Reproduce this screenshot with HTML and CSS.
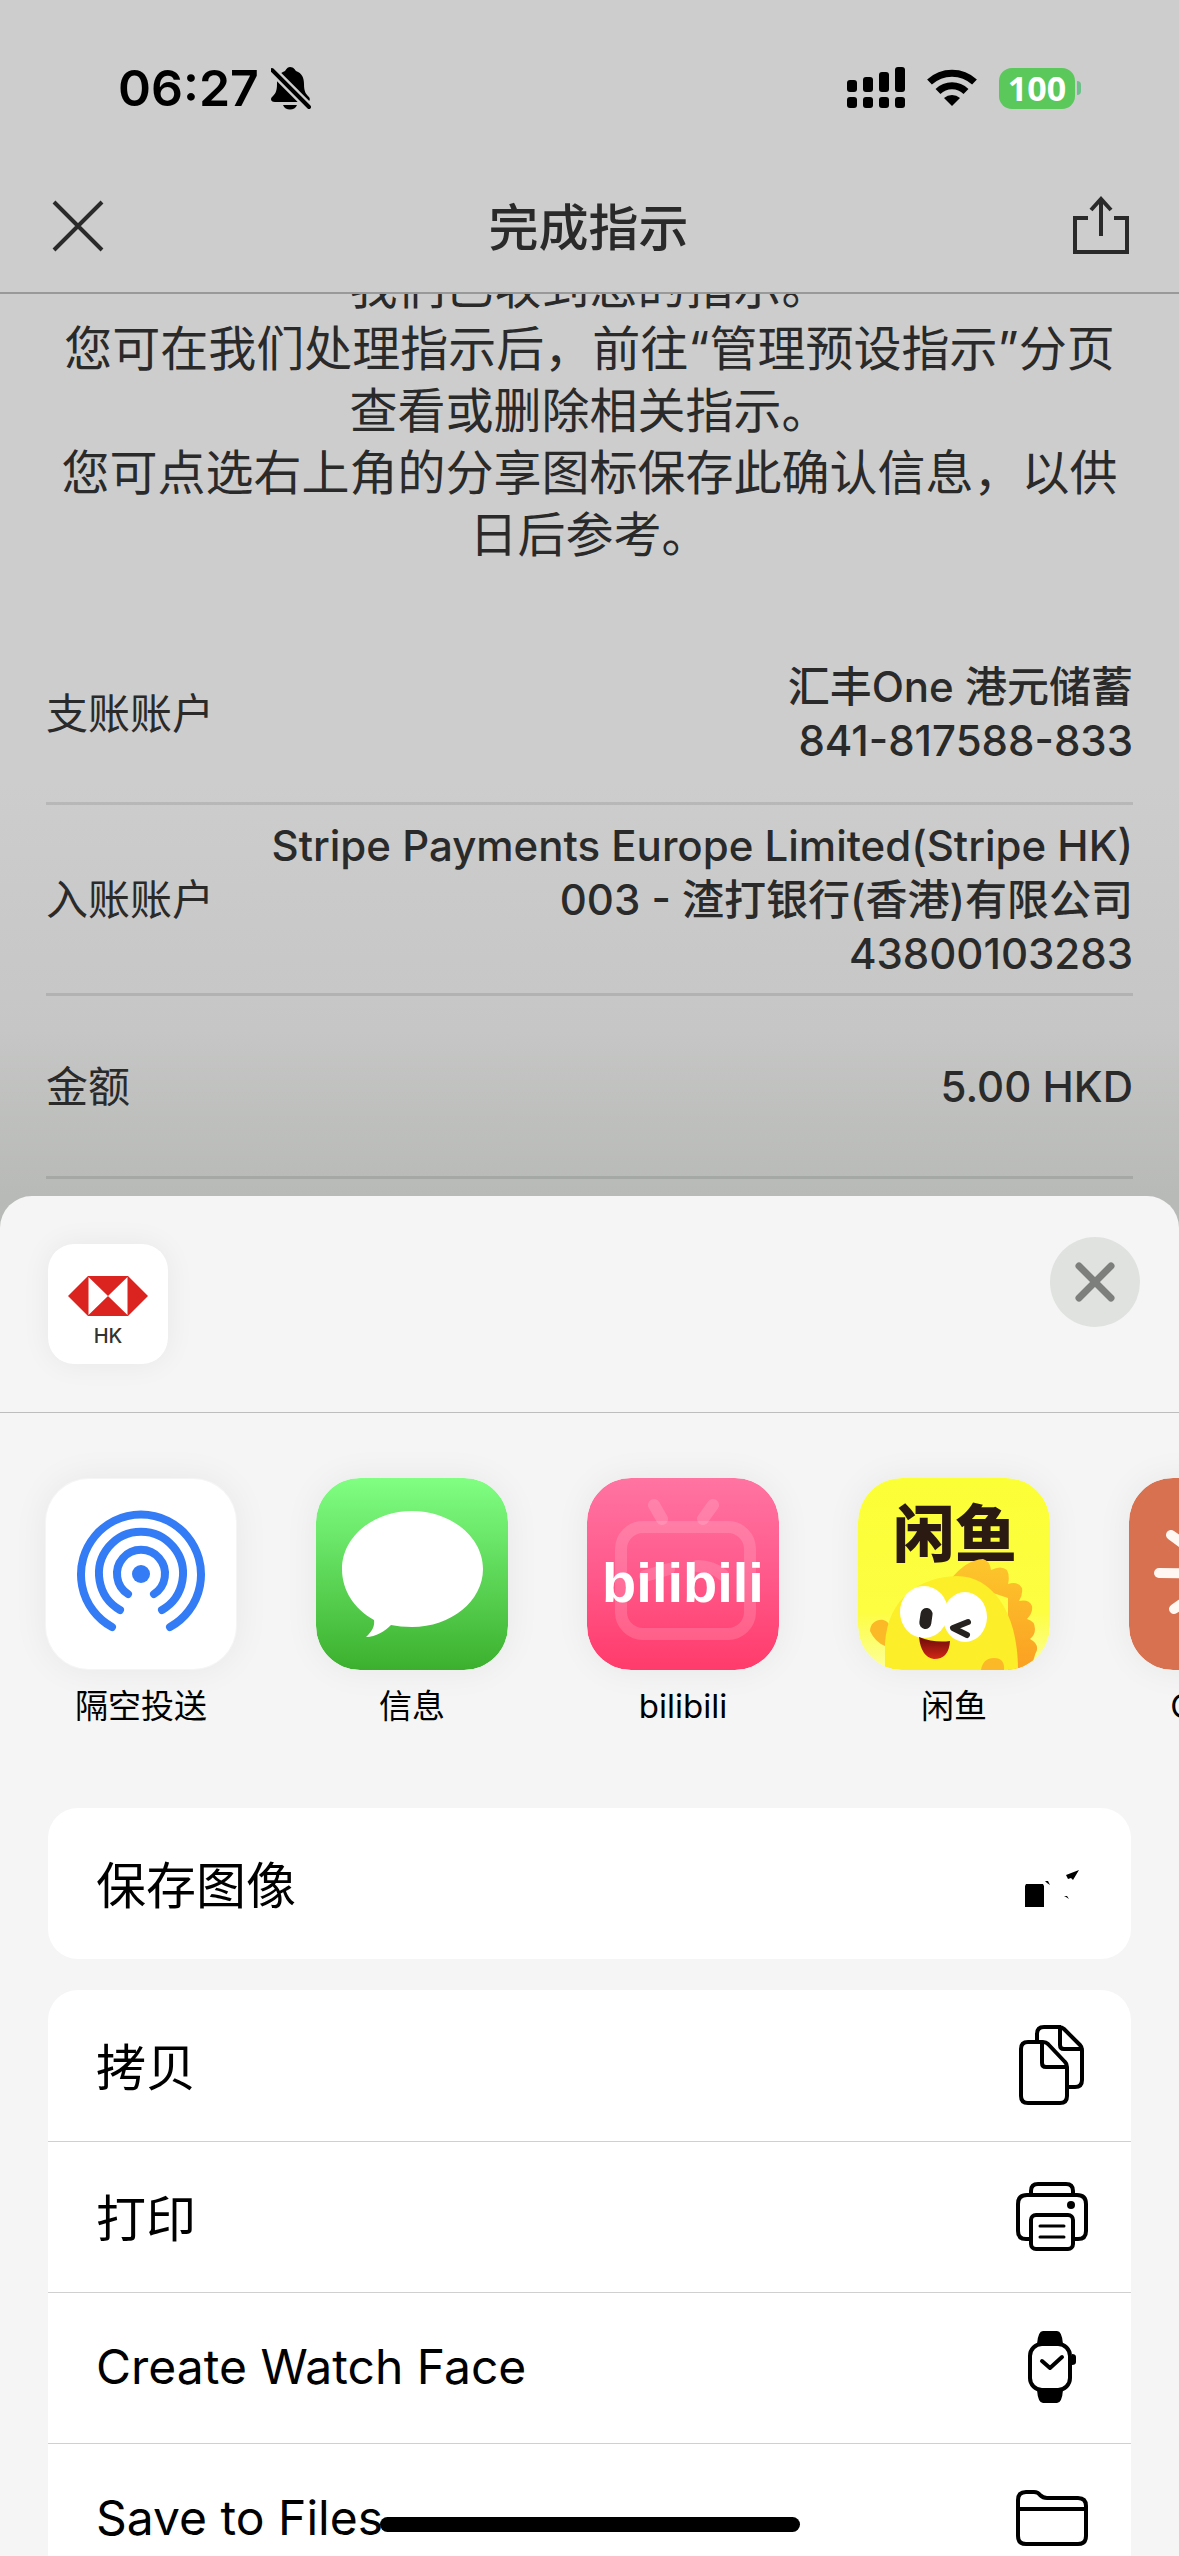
FILE: index.html
```html
<!DOCTYPE html>
<html lang="zh-CN">
<head>
<meta charset="utf-8">
<meta name="viewport" content="width=device-width, initial-scale=1">
<title>完成指示</title>
<link rel="stylesheet" href="styles.css">
</head>
<body>
<div class="screen">
  <header class="status">
    <div class="status-left">
      <span class="time">06:27</span>
      <svg class="bell" viewBox="0 0 40 43" aria-hidden="true">
        <path d="M19 0C23 0 24 3 25 4C31 6 33 11 33 17C33 25 35 27 38 30C40 33 38 35 35 35H4C0 35 -1 32 1 30C4 27 6 25 6 17C6 11 8 6 14 4C15 3 16 0 19 0ZM12 38H26C25 41 22 42.500 19 42.500S13 41 12 38Z"/>
        <path class="bell-gap" d="M1 3L38 40"/>
        <path class="bell-slash" d="M1 3L38 40"/>
      </svg>
    </div>
    <div class="status-right">
      <svg class="signal" viewBox="0 0 58 42" aria-hidden="true">
        <rect x="0" y="13" width="10" height="12" rx="3"/><rect x="16" y="10" width="10" height="15" rx="3"/><rect x="32" y="5" width="10" height="20" rx="3"/><rect x="48" y="0" width="10" height="25" rx="3"/>
        <rect x="0" y="30" width="10" height="11" rx="3"/><rect x="16" y="30" width="10" height="11" rx="3"/><rect x="32" y="30" width="10" height="11" rx="3"/><rect x="48" y="30" width="10" height="11" rx="3"/>
      </svg>
      <svg class="wifi" viewBox="0 0 50 38" aria-hidden="true">
        <path class="wifi-arc" d="M2.500 13A33 33 0 0 1 47.500 13M11 22.500A20 20 0 0 1 39 22.500"/>
        <path d="M25 37L17 29A12 12 0 0 1 33 29Z"/>
      </svg>
      <div class="battery"><span class="battery-level">100</span><span class="battery-nub"></span></div>
    </div>
  </header>

  <nav class="navbar">
    <button class="icon-button" aria-label="关闭">
      <svg class="nav-close" viewBox="0 0 52 52" aria-hidden="true"><path d="M2 2L50 50M50 2L2 50"/></svg>
    </button>
    <h1 class="title">完成指示</h1>
    <button class="icon-button" aria-label="分享">
      <svg class="nav-share" viewBox="0 0 56 60" aria-hidden="true"><path d="M15 22H2V56H54V22H41M28 40V3M18 14L28 3L38 14"/></svg>
    </button>
  </nav>

  <main class="content">
    <p class="message">我们已收到您的指示。<br>您可在我们处理指示后，前往“管理预设指示”分页查看或删除相关指示。<br>您可点选右上角的分享图标保存此确认信息，以供日后参考。</p>
    <dl class="details">
      <div class="detail"><dt>支账账户</dt><dd>汇丰One 港元储蓄<br>841-817588-833</dd></div>
      <div class="detail"><dt>入账账户</dt><dd>Stripe Payments Europe Limited(Stripe HK)<br>003 - 渣打银行(香港)有限公司<br>43800103283</dd></div>
      <div class="detail"><dt>金额</dt><dd>5.00 HKD</dd></div>
    </dl>
  </main>

  <section class="sheet" aria-label="共享">
    <div class="sheet-header">
      <svg class="source-icon" viewBox="0 0 120 120" role="img" aria-label="HSBC HK">
        <rect width="120" height="120" rx="26" fill="#fff"/>
        <path fill="#db2420" d="M20 52L40 32H80L100 52L80 72H40Z"/>
        <path fill="#fff" d="M40.500 33L60 52L40.500 71ZM79.500 33L60 52L79.500 71Z"/>
        <text class="source-text" x="60" y="99" text-anchor="middle">HK</text>
      </svg>
      <button class="sheet-close" aria-label="关闭共享">
        <svg viewBox="0 0 90 90" aria-hidden="true"><path d="M29 29L61 61M61 29L29 61"/></svg>
      </button>
    </div>

    <div class="apps">
      <button class="app">
        <svg class="app-icon" viewBox="0 0 192 192" aria-hidden="true">
          <rect x="1" y="1" width="190" height="190" rx="43" fill="#fff"/>
          <g fill="none" stroke="#347cf6" stroke-width="8" stroke-linecap="round">
            <path d="M67 149A60 60 0 1 1 125 149"/>
            <path d="M75 132A42 42 0 1 1 117 132"/>
            <path d="M83 116A24 24 0 1 1 109 116"/>
          </g>
          <circle cx="96" cy="96" r="9" fill="#347cf6"/>
        </svg>
        <span>隔空投送</span>
      </button>
      <button class="app">
        <svg class="app-icon" viewBox="0 0 192 192" aria-hidden="true">
          <defs><linearGradient id="green" x2="0" y2="1"><stop stop-color="#80ff83"/><stop offset="1" stop-color="#3cb02e"/></linearGradient></defs>
          <rect width="192" height="192" rx="44" fill="url(#green)"/>
          <path fill="#fff" d="M96 33C135 33 167 59 167 91S135 149 96 149C88 149 81 148 75 147C69 153 60 159 50 159C55 154 59 149 58 142C38 131 26 112 26 91C26 59 57 33 96 33Z"/>
        </svg>
        <span>信息</span>
      </button>
      <button class="app">
        <svg class="app-icon" viewBox="0 0 192 192" aria-hidden="true">
          <defs><linearGradient id="pink" x2="0" y2="1"><stop stop-color="#ff74a2"/><stop offset=".45" stop-color="#ff5c8e"/><stop offset="1" stop-color="#ff3b6b"/></linearGradient></defs>
          <rect width="192" height="192" rx="44" fill="url(#pink)"/>
          <g fill="none" stroke="#fff" stroke-opacity=".15" stroke-width="12" stroke-linecap="round">
            <rect x="34" y="49" width="129" height="107" rx="22"/>
            <path d="M67 27L75 41M126 27L116 41M58 98L82 91M110 88Q126 88 136 97"/>
          </g>
          <text class="bili-mark" x="96" y="124" text-anchor="middle">bilibili</text>
        </svg>
        <span>bilibili</span>
      </button>
      <button class="app">
        <svg class="app-icon" viewBox="0 0 192 192" aria-hidden="true">
          <defs>
            <clipPath id="tile"><rect width="192" height="192" rx="44"/></clipPath>
            <linearGradient id="yellow" x2="0" y2="1"><stop stop-color="#fbff35"/><stop offset=".7" stop-color="#fdfd42"/><stop offset="1" stop-color="#fcff9b"/></linearGradient>
            <linearGradient id="orange" x2="0" y2="1"><stop stop-color="#fdc72c"/><stop offset="1" stop-color="#fb9f22"/></linearGradient>
            <linearGradient id="mouth" x2="0" y2="1"><stop stop-color="#6b0b08"/><stop offset="1" stop-color="#d32717"/></linearGradient>
          </defs>
          <g clip-path="url(#tile)">
            <rect width="192" height="192" fill="url(#yellow)"/>
            <text class="fish-mark" x="97" y="79" text-anchor="middle">闲鱼</text>
            <path fill="url(#orange)" d="M93 101Q108 82 125 81Q132 83 133 92Q143 87 149 92Q152 98 150 106Q160 103 164 110Q165 117 161 123Q171 121 174 128Q175 135 169 141Q177 143 177 151Q177 157 172 161Q180 165 179 172Q175 180 174 192H150V120Z"/>
            <path fill="#fbb928" d="M12 153C12 141 29 137 32 149L27 168Q17 164 12 153Z"/>
            <path fill="#fcee28" d="M27 192V165C30 119 63 99 99 98C132 98 160 131 160 192Z"/>
            <ellipse cx="66" cy="134" rx="24" ry="26" fill="#fff"/>
            <ellipse cx="107" cy="139" rx="22" ry="25" fill="#fff"/>
            <rect x="62" y="130" width="12" height="21" rx="6" fill="#25221f" transform="rotate(8 68 140)"/>
            <path d="M110 144L95 150L109 157" fill="none" stroke="#25221f" stroke-width="6" stroke-linecap="round" stroke-linejoin="round"/>
            <path fill="url(#mouth)" d="M61 159Q76 165 92 163Q91 181 76 181Q63 179 61 159Z"/>
            <path fill="#fbb928" d="M123 192Q125 180 136 180T146 192Z"/>
          </g>
        </svg>
        <span>闲鱼</span>
      </button>
      <button class="app">
        <svg class="app-icon" viewBox="0 0 192 192" aria-hidden="true">
          <rect width="192" height="192" rx="44" fill="#d77150"/>
          <path d="M96 96L30 95M96 96L42 57M96 96L45 131M96 96L70 35M96 96L98 28M96 96L138 40M96 96L162 78M96 96L162 108M96 96L142 142M96 96L104 164M96 96L66 154" stroke="#fff7f2" stroke-width="10" stroke-linecap="round"/>
        </svg>
        <span>Claude</span>
      </button>
    </div>

    <div class="actions">
      <button class="action">
        <span>保存图像</span>
        <svg class="action-icon" viewBox="0 0 72 84" aria-hidden="true">
          <path class="solid" d="M10 44H27L28 46V67H9V46ZM50 35L63 30L57 40L55 38L52 39ZM29 41L32 41L34 45L31 43ZM48 56L51 56L53 59L50 57Z"/>
        </svg>
      </button>
    </div>

    <div class="actions">
      <button class="action">
        <span>拷贝</span>
        <svg class="action-icon" viewBox="0 0 72 84" aria-hidden="true">
          <path d="M12 20H27Q30 20 32 22L49 40Q51 42 51 45V74Q51 81 44 81H12Q5 81 5 74V27Q5 20 12 20ZM26 20V41Q26 45 30 45H51M21 20V12Q21 5 28 5H43Q46 5 48 7L64 23Q66 25 66 28V58Q66 65 59 65H51M44 5V23Q44 27 48 27H66"/>
        </svg>
      </button>
      <button class="action">
        <span>打印</span>
        <svg class="action-icon" viewBox="0 0 72 84" aria-hidden="true">
          <path d="M15 66H10Q2 66 2 58V31Q2 22 11 22H61Q70 22 70 31V58Q70 66 62 66H57M15 22V18Q15 11 22 11H50Q57 11 57 18V22"/>
          <rect x="15" y="42" width="42" height="34" rx="5"/>
          <path class="thin" d="M24 53H48M24 64H48"/>
          <circle class="solid" cx="55" cy="32" r="4"/>
        </svg>
      </button>
      <button class="action">
        <span lang="en">Create Watch Face</span>
        <svg class="action-icon" viewBox="0 0 72 84" aria-hidden="true">
          <path class="solid" d="M21 20Q22 7 27 7H41Q46 7 47 20ZM21 66Q22 79 27 79H41Q46 79 47 66ZM56 30Q60 30 60 33V38Q60 41 56 41Z"/>
          <rect class="face" x="14" y="20" width="40" height="46" rx="12"/>
          <path d="M26 37L34 44L46 33"/>
        </svg>
      </button>
      <button class="action">
        <span lang="en">Save to Files</span>
        <svg class="action-icon" viewBox="0 0 72 84" aria-hidden="true">
          <path d="M2 25Q2 17 10 17H18Q22 17 24 20Q27 23 31 23H62Q70 23 70 31V61Q70 69 62 69H10Q2 69 2 61ZM2 34H70"/>
        </svg>
      </button>
    </div>
  </section>
  <div class="home-bar"></div>
</div>
</body>
</html>
```
FILE: styles.css
```css
* { box-sizing: border-box; }

body {
  margin: 0;
  font-family: Inter, "Noto Sans CJK SC", sans-serif;
  color: #000;
}

button {
  margin: 0;
  padding: 0;
  border: 0;
  background: none;
  color: inherit;
  font: inherit;
}

svg { display: block; }

.screen {
  position: relative;
  display: flex;
  flex-direction: column;
  height: 100vh;
  overflow: hidden;
  background: linear-gradient(#cdcdcd 0, #cdcdcd 780px, #c5c6c5 1030px, #b8bab7 1196px, #b8bab7);
}

.status {
  flex: none;
  display: flex;
  align-items: center;
  justify-content: space-between;
  height: 160px;
  padding: 16px 98px 0 118px;
}

.status-left, .status-right { display: flex; align-items: center; }
.status-left { gap: 12px; }
.status-right { gap: 22px; }
.time { font-size: 50px; font-weight: 600; line-height: 60px; }
.bell { width: 40px; height: 43px; }
.bell-gap { stroke: #cdcdcd; stroke-width: 9px; }
.bell-slash { stroke: #000; stroke-width: 4px; stroke-linecap: round; }
.signal { width: 58px; height: 42px; }
.wifi { width: 50px; height: 38px; }
.wifi-arc { fill: none; stroke: #000; stroke-width: 7px; }

.battery { display: flex; align-items: center; gap: 2px; }
.battery-level {
  width: 76px;
  border-radius: 13px;
  background: #5ac85a;
  color: #fff;
  font: 700 34px/41px "Open Sans", sans-serif;
  text-align: center;
}
.battery-nub { width: 4px; height: 14px; border-radius: 0 6px 6px 0; background: #6cc08a; }

.navbar {
  flex: none;
  display: flex;
  align-items: center;
  justify-content: space-between;
  height: 134px;
  padding: 0 50px 0 52px;
  border-bottom: 2px solid #999;
  color: #2a2a2a;
}
.title { margin: 0; padding-top: 4px; font-size: 50px; font-weight: 500; line-height: 60px; }
.nav-close { width: 52px; height: 52px; }
.nav-share { width: 56px; height: 60px; }
.icon-button svg { fill: none; stroke: #2a2a2a; stroke-width: 4px; }

.content { flex: none; overflow: hidden; color: #2a2a2a; padding: 0 46px 17px; }
.message { margin: -38px 0 62px; font-size: 48px; line-height: 62px; text-align: center; }
.details { margin: 0; }
.detail {
  display: flex;
  align-items: center;
  justify-content: space-between;
  min-height: 183px;
  padding: 14px 0 12px;
  border-bottom: 3px solid rgba(0, 0, 0, .1);
  font-size: 42px;
  line-height: 54px;
}
.detail:first-child { min-height: 177px; padding: 12px 0 14px; }
.detail dt { white-space: nowrap; }
.detail dd { margin: 0; font-weight: 500; text-align: right; }

.sheet {
  flex: 1 0 auto;
  border-radius: 32px 32px 0 0;
  background: #f4f5f4;
}
.sheet-header {
  display: flex;
  align-items: flex-start;
  justify-content: space-between;
  height: 217px;
  padding: 48px 39px 0 48px;
  border-bottom: 1px solid #bdbdbd;
}
.source-icon {
  width: 120px;
  height: 120px;
  border-radius: 26px;
  box-shadow: 0 0 30px rgba(0, 0, 0, .06);
}
.source-text { font: 500 20px Inter, sans-serif; fill: #333; }
.sheet-close { margin-top: -7px; border-radius: 50%; background: #e0e2e0; }
.sheet-close svg { width: 90px; height: 90px; stroke: #7d7f7d; stroke-width: 7px; stroke-linecap: round; }

.apps {
  display: flex;
  gap: 79px;
  padding: 65px 0 80px 45px;
  overflow: hidden;
}
.app {
  flex: none;
  display: flex;
  flex-direction: column;
  align-items: center;
  gap: 14px;
  width: 192px;
  font-size: 33px;
  line-height: 44px;
}
.app-icon {
  width: 192px;
  height: 192px;
  border-radius: 44px;
  box-shadow: 0 0 36px rgba(0, 0, 0, .06);
}
.bili-mark { font: 700 56px "Liberation Sans", sans-serif; fill: #fff; }
.fish-mark { font: 900 62px "Noto Sans CJK SC", sans-serif; fill: #2b1a12; }

.actions {
  margin: 0 48px 31px;
  border-radius: 30px;
  background: #fff;
  overflow: hidden;
}
.action {
  display: flex;
  align-items: center;
  justify-content: space-between;
  width: 100%;
  height: 151px;
  padding: 0 43px 4px 48px;
  font-size: 50px;
  text-align: left;
}
.action [lang="en"] { font-size: 48px; }
.action + .action { border-top: 1px solid #d0d0d0; }
.action-icon {
  width: 72px;
  height: 84px;
  fill: none;
  stroke: #000;
  stroke-width: 4px;
  stroke-linecap: round;
  stroke-linejoin: round;
}
.action-icon .solid { fill: #000; stroke: none; }
.action-icon .thin { stroke-width: 3px; }
.action-icon .face { fill: #fff; }

.home-bar {
  position: absolute;
  bottom: 24px;
  left: 50%;
  width: 420px;
  height: 15px;
  margin-left: -210px;
  border-radius: 8px;
  background: #000;
}
```
